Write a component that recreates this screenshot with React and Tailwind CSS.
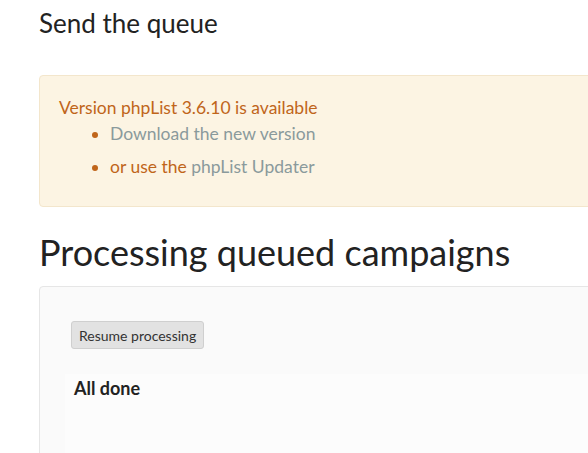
export default function App() {
  return (
    <div className="w-[588px] h-[453px] overflow-hidden bg-white font-['Lato',sans-serif] text-[#2a2a2a]">
      <div className="pl-[39px] w-[700px]">
        <h1 className="pt-[7px] text-[26px] leading-[32px] text-[#222]">Send the queue</h1>
        <div className="mt-[36px] h-[132px] rounded-[4px] border border-[#f3e6cc] bg-[#fcf4e3] pl-[19px] pt-[21px] text-[17.5px] text-[#c0651a]">
          <div className="leading-[22px]">Version phpList 3.6.10 is available</div>
          <ul className="ml-[51px] list-disc marker:text-[#c0651a]">
            <li className="leading-[22px] mt-[4px] text-[#8a9a9c]">Download the new version</li>
            <li className="leading-[22px] mt-[11px]">or use the <span className="text-[#8a9a9c]">phpList Updater</span></li>
          </ul>
        </div>
        <h1 className="mt-[21px] text-[36px] leading-[48px] text-[#222]">Processing queued campaigns</h1>
        <div className="mt-[10px] h-[200px] rounded-[4px] border border-[#e6e6e6] bg-[#fafafa] pl-[31px] pt-[34px]">
          <button className="h-[28px] px-[7px] rounded-[3px] border border-[#cfcfcf] bg-[#e2e2e2] text-[14px] text-[#333]">Resume processing</button>
          <div className="mt-[25px] -ml-[6px] h-[200px] bg-[#fcfcfc] pl-[9px] pt-[3px]">
            <div className="text-[18px] font-bold leading-[22px] text-[#222]">All done</div>
          </div>
        </div>
      </div>
    </div>
  );
}
